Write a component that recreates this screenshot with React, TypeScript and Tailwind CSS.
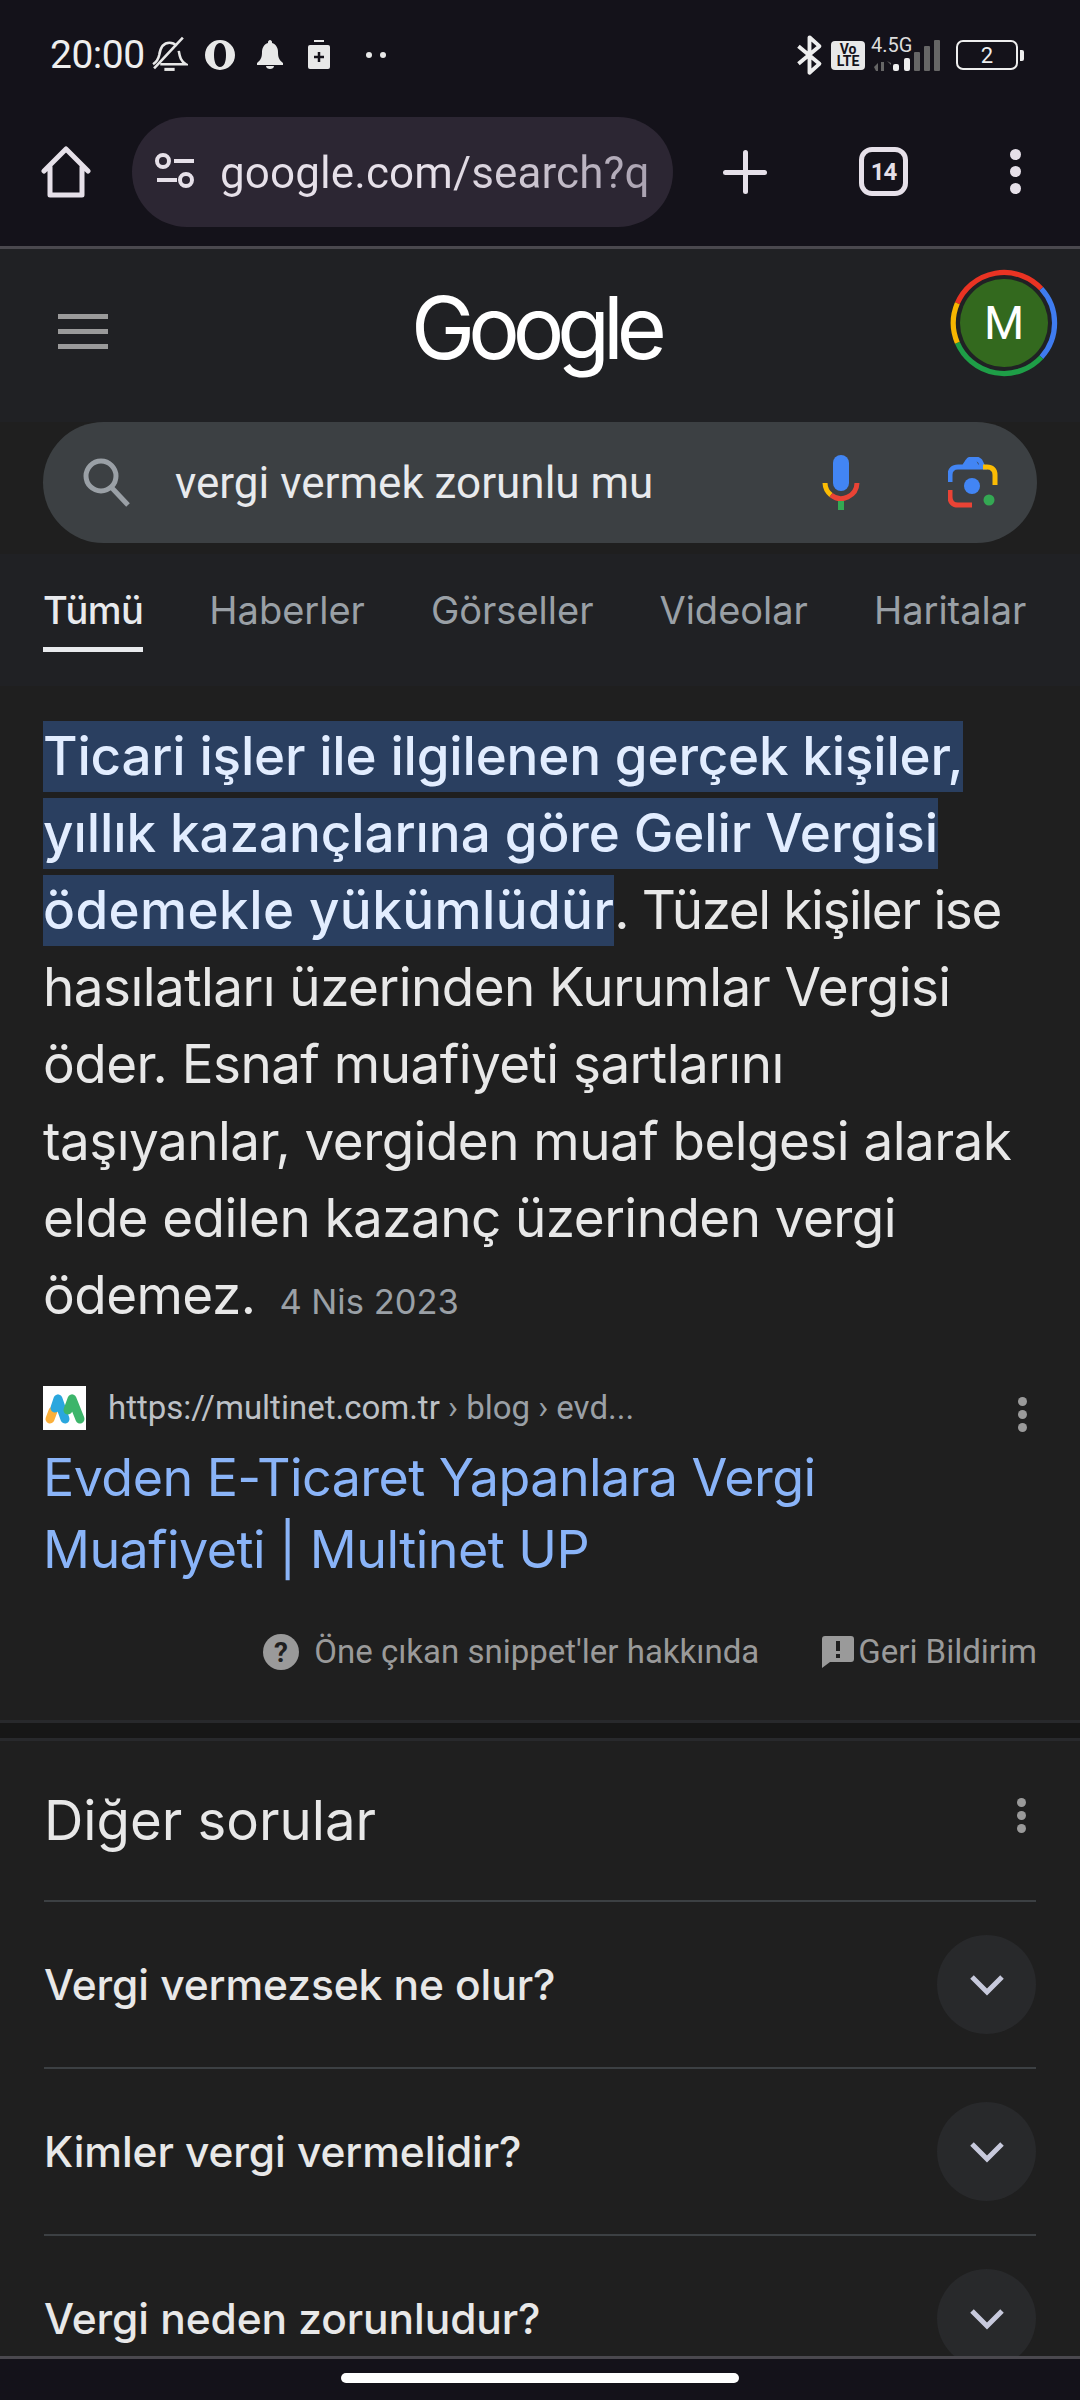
const sans = "font-['Inter',sans-serif]";
const roboto = "font-['Roboto',sans-serif]";

const StatusBar = () => (
  <div className="h-[102px] shrink-0 relative flex items-center justify-between pl-[50px] pr-[56px] pt-[8px]">
    <div className="flex items-center">
      <span className={`${roboto} text-[39px] text-[#eeeeee] tracking-[-0.5px]`}>20:00</span>
      <svg className="ml-[6px]" width="37" height="40" viewBox="0 0 36 38" fill="none" stroke="#e8e8e8" strokeWidth="2.5">
        <path d="M2 28c3-2 5-4 6-9 1-7 4-12 10-12 3 0 5 1 7 3M27 15c1 6 2 10 7 13H9" />
        <path d="M3 32L31 2" />
        <path d="M13 33h10" strokeWidth="3" />
      </svg>
      <svg className="ml-[16px]" width="32" height="32" viewBox="0 0 32 32">
        <path fillRule="evenodd" fill="#e8e8e8" d="M16 1a15 15 0 1 0 0 30 15 15 0 0 0 0-30zm0 3c-4 0-6 5-6 12s2 12 6 12 6-5 6-12-2-12-6-12z" />
      </svg>
      <svg className="ml-[20px]" width="28" height="32" viewBox="0 0 28 32" fill="#e8e8e8">
        <path d="M14 1c1 0 2 1 2 2v1c4 1 6 5 6 9 0 5 1 8 5 11v2H1v-2c4-3 5-6 5-11 0-4 2-8 6-9V3c0-1 1-2 2-2z" />
        <path d="M10 27h8c0 2-2 3-4 3s-4-1-4-3z" />
      </svg>
      <svg className="ml-[23px]" width="24" height="30" viewBox="0 0 24 30">
        <rect x="7" y="0" width="10" height="2" fill="#e8e8e8" />
        <rect x="1" y="5" width="22" height="24" rx="2" fill="#e8e8e8" />
        <path d="M12 12v10M7 17h10" stroke="#14121a" strokeWidth="2.5" />
      </svg>
      <div className="ml-[35px] flex gap-[8px]">
        <div className="w-[6px] h-[6px] rounded-full bg-[#e8e8e8]" />
        <div className="w-[6px] h-[6px] rounded-full bg-[#e8e8e8]" />
      </div>
    </div>
    <div className="flex items-center">
      <svg width="27" height="42" viewBox="0 0 24 38" fill="none" stroke="#eeeeee" strokeWidth="3.5" strokeLinejoin="round">
        <path d="M2 11l19 16-9 8V3l9 8L2 27" />
      </svg>
      <div className={`${roboto} ml-[8px] w-[34px] h-[29px] rounded-[4px] bg-[#e8e8e8] text-[#14121a] text-[14px] leading-[12px] font-bold flex flex-col items-center justify-center`}>
        <span>Vo</span>
        <span>LTE</span>
      </div>
      <div className="ml-[6px] w-[70px] h-[36px] relative">
        <span className={`${roboto} absolute left-0 top-[-7px] text-[20px] text-[#dddddd]`}>4.5G</span>
        <svg className="absolute left-0 top-0" width="70" height="36" viewBox="0 0 70 36">
          <path d="M3 30l4-4v8H5zM10 25v9h3v-9zM16 24l4 4v-2z" fill="#666666" />
          <rect x="22" y="27" width="6" height="7" rx="2" fill="#eeeeee" />
          <rect x="33" y="21" width="6" height="13" rx="2" fill="#eeeeee" />
          <rect x="43" y="15" width="6" height="19" rx="1" fill="#666666" />
          <rect x="53" y="9" width="6" height="25" rx="1" fill="#666666" />
          <rect x="63" y="3" width="6" height="31" rx="1" fill="#666666" />
        </svg>
      </div>
      <div className="ml-[15px] flex items-center">
        <div className={`${roboto} w-[62px] h-[30px] rounded-[7px] border-[2.5px] border-[#eeeeee] text-[#eeeeee] text-[22px] flex items-center justify-center`}>2</div>
        <div className="ml-[2px] w-[4px] h-[11px] rounded-r-[2px] bg-[#eeeeee]" />
      </div>
    </div>
  </div>
);

const Toolbar = () => (
  <div className="h-[147px] shrink-0 flex items-center border-b-[3px] border-[#4a484e] pb-[5px]">
    <div className="w-[132px] flex justify-center">
      <svg width="50" height="52" viewBox="0 0 50 52" fill="none" stroke="#e6e0e9" strokeWidth="5" strokeLinejoin="round" strokeLinecap="round">
        <path d="M3 25L25 3l22 22M9 21v28h32V21" />
      </svg>
    </div>
    <div className="w-[541px] h-[110px] rounded-full bg-[#2c2633] flex items-center pl-[22px] overflow-hidden">
      <svg width="42" height="38" viewBox="0 0 42 38" fill="none" stroke="#e6e0e9" strokeWidth="4">
        <circle cx="9" cy="8" r="6" />
        <path d="M20 8h20M3 27h20" />
        <circle cx="32" cy="27" r="6" />
      </svg>
      <span className={`${roboto} ml-[24px] pt-[2px] w-[440px] whitespace-nowrap text-[44px] tracking-[0.1px] bg-gradient-to-r from-[#e6e0e9] from-[50%] to-[#a79fae] bg-clip-text text-transparent`}>
        google.com/search?q
      </span>
    </div>
    <div className="ml-[50px] w-[44px] h-[44px] relative">
      <div className="absolute left-[20px] top-0 w-[5px] h-[44px] rounded-full bg-[#e6e0e9]" />
      <div className="absolute top-[20px] left-0 h-[5px] w-[44px] rounded-full bg-[#e6e0e9]" />
    </div>
    <div className={`${roboto} ml-[92px] w-[49px] h-[49px] rounded-[13px] border-[5px] border-[#e6e0e9] flex items-center justify-center text-[#e6e0e9] text-[24px] font-bold tracking-[-1px]`}>14</div>
    <div className="ml-[102px] flex flex-col gap-[6px]">
      <div className="w-[11px] h-[11px] rounded-full bg-[#e6e0e9]" />
      <div className="w-[11px] h-[11px] rounded-full bg-[#e6e0e9]" />
      <div className="w-[11px] h-[11px] rounded-full bg-[#e6e0e9]" />
    </div>
  </div>
);

const Avatar = () => (
  <div className="relative w-[112px] h-[112px] flex items-center justify-center">
    <svg className="absolute inset-0" width="112" height="112" viewBox="0 0 108 108" fill="none" strokeWidth="5">
      <path d="M9 35A49 49 0 0 1 90 21" stroke="#ea3323" />
      <path d="M90 21A49 49 0 0 1 90 87" stroke="#3f7cf0" />
      <path d="M90 87A49 49 0 0 1 9 73" stroke="#1e9e47" />
      <path d="M9 73A49 49 0 0 1 9 35" stroke="#f7b500" />
    </svg>
    <div className={`${roboto} w-[88px] h-[88px] rounded-full bg-[#33691e] text-white text-[46px] flex items-center justify-center`}>M</div>
  </div>
);

const Header = () => (
  <div className="bg-[#202124] h-[173px] shrink-0 relative flex justify-between pl-[58px] pr-[20px] pt-[18px]">
    <div className="mt-[47px] flex flex-col gap-[10px]">
      <div className="w-[50px] h-[5px] bg-[#9a9a9a]" />
      <div className="w-[50px] h-[5px] bg-[#9a9a9a]" />
      <div className="w-[50px] h-[5px] bg-[#9a9a9a]" />
    </div>
    <div className={`${sans} absolute left-[411px] top-[29px] text-[86px] leading-[100px] text-white font-normal tracking-[-7px]`}>Google</div>
    <Avatar />
  </div>
);

const MicIcon = () => (
  <svg width="38" height="56" viewBox="0 0 38 56" fill="none">
    <rect x="11" y="0" width="16" height="36" rx="8" fill="#4285f4" />
    <path d="M3 28a16 16 0 0 0 6 12" stroke="#fbbc04" strokeWidth="5" />
    <path d="M9 40a16 16 0 0 0 26-12" stroke="#ea4335" strokeWidth="5" />
    <rect x="16" y="46" width="6" height="9" fill="#34a853" />
  </svg>
);

const LensIcon = () => (
  <svg width="50" height="52" viewBox="0 0 50 52" fill="none" strokeWidth="5">
    <path d="M2 25v-7c0-5 3-8 8-8h6l4-6c1-2 3-2 4-2h4c2 0 3 1 4 2l3 6H16" stroke="#4285f4" />
    <path d="M35 10h4c5 0 8 3 8 8v10" stroke="#fbbc04" />
    <path d="M2 33v7c0 5 3 8 8 8h14" stroke="#ea4335" />
    <path d="M14 11h18l-4-8h-10z" fill="#4285f4" stroke="none" />
    <circle cx="24" cy="29" r="8" fill="#4285f4" stroke="none" />
    <circle cx="41" cy="43" r="5.5" fill="#34a853" stroke="none" />
  </svg>
);

const SearchBox = () => (
  <div className="bg-[#1f1f1f] shrink-0 px-[43px] pb-[11px] h-[132px] relative">
    <div className="h-[121px] rounded-full bg-[#3c4043] flex items-center pl-[40px] pr-[39px]">
      <svg width="48" height="50" viewBox="0 0 48 50" fill="none" stroke="#9aa0a6" strokeWidth="5">
        <circle cx="18" cy="18" r="15" />
        <path d="M29 30l16 17" />
      </svg>
      <span className={`${roboto} ml-[44px] text-[44px] text-[#e8eaed] flex-1`}>vergi vermek zorunlu mu</span>
      <MicIcon />
      <div className="ml-[88px]">
        <LensIcon />
      </div>
    </div>
  </div>
);

const tabs = ["Tümü", "Haberler", "Görseller", "Videolar", "Haritalar"];

const Tabs = () => (
  <div className={`${sans} bg-[#202124] h-[132px] shrink-0 flex gap-[66px] pl-[43px] whitespace-nowrap`}>
    {tabs.map((t, i) => (
      <div key={t} className={`relative pt-[29px] text-[38px] leading-[54px] ${i === 0 ? "text-[#e8eaed] font-medium tracking-[-0.5px]" : "text-[#9aa0a6]"}`}>
        {t}
        {i === 0 && <div className="absolute left-0 right-0 top-[93px] h-[5px] bg-[#e8eaed]" />}
      </div>
    ))}
  </div>
);

const Snippet = () => {
  const hl = "bg-[#2a3f60] text-[#e2edff] font-medium w-fit";
  const line = "h-[77px]";
  return (
    <div className={`${sans} mt-[35px] px-[43px] text-[53px] leading-[71px] text-[#e8e8e8] whitespace-nowrap tracking-[-0.55px]`}>
      <div className={line}>
        <div className={`${hl} tracking-[-0.2px]`}>Ticari işler ile ilgilenen gerçek kişiler,</div>
      </div>
      <div className={line}>
        <div className={`${hl} tracking-[-0.1px]`}>yıllık kazançlarına göre Gelir Vergisi</div>
      </div>
      <div className={line}>
        <span className={`${hl} inline-block tracking-[0.4px]`}>ödemekle yükümlüdür</span>
        <span className="tracking-[-1.4px]">. Tüzel kişiler ise</span>
      </div>
      <div className={line}>hasılatları üzerinden Kurumlar Vergisi</div>
      <div className={line}>öder. Esnaf muafiyeti şartlarını</div>
      <div className={line}>taşıyanlar, vergiden muaf belgesi alarak</div>
      <div className={line}>elde edilen kazanç üzerinden vergi</div>
      <div className={line}>
        ödemez.
        <span className="ml-[24px] text-[34.5px] text-[#9aa0a6] tracking-normal">4 Nis 2023</span>
      </div>
    </div>
  );
};

const Favicon = () => (
  <svg width="43" height="44" viewBox="0 0 43 44" className="bg-white shrink-0" fill="none" strokeLinecap="round">
    <path d="M7 33l3-8" stroke="#fbb03b" strokeWidth="9" />
    <path d="M12 22l3-9M15 13l7 20" stroke="#2aa7de" strokeWidth="9" />
    <path d="M25 24l4-11M29 13l8 20" stroke="#3cb56a" strokeWidth="9" />
  </svg>
);

const Source = () => (
  <div className="mt-[49px] px-[43px]">
    <div className="h-[44px] flex items-center relative">
      <Favicon />
      <span className={`${roboto} ml-[22px] text-[33px] text-[#bdc1c6]`}>
        https://multinet.com.tr<span className="text-[#9aa0a6]"> › blog › evd...</span>
      </span>
      <div className="absolute right-[10px] top-[11px] flex flex-col gap-[4px]">
        <div className="w-[9px] h-[9px] rounded-full bg-[#9a9a9a]" />
        <div className="w-[9px] h-[9px] rounded-full bg-[#9a9a9a]" />
        <div className="w-[9px] h-[9px] rounded-full bg-[#9a9a9a]" />
      </div>
    </div>
    <div className={`${sans} mt-[12px] text-[52px] leading-[72px] text-[#8ab4f8] tracking-[-0.55px]`}>
      Evden E-Ticaret Yapanlara Vergi
      <br />
      Muafiyeti | Multinet UP
    </div>
    <div className={`${roboto} mt-[46px] h-[40px] flex items-center justify-end text-[33px] text-[#9a9a9a]`}>
      <svg width="36" height="38" viewBox="0 0 36 38">
        <circle cx="18" cy="19" r="18" fill="#9a9a9a" />
        <text x="18" y="29" textAnchor="middle" fontSize="28" fontWeight="700" fill="#1f1f1f" fontFamily="Roboto">?</text>
      </svg>
      <span className="ml-[15px]">Öne çıkan snippet'ler hakkında</span>
      <svg className="ml-[63px]" width="32" height="32" viewBox="0 0 32 32">
        <path d="M3 0h26c2 0 3 1 3 3v20c0 2-1 3-3 3H8l-8 6V3c0-2 1-3 3-3z" fill="#9a9a9a" />
        <rect x="14" y="5" width="4" height="10" fill="#1f1f1f" />
        <rect x="14" y="18" width="4" height="4" fill="#1f1f1f" />
      </svg>
      <span className="ml-[4px]">Geri Bildirim</span>
    </div>
  </div>
);

const questions = ["Vergi vermezsek ne olur?", "Kimler vergi vermelidir?", "Vergi neden zorunludur?"];

const Related = () => (
  <div className="px-[44px] relative flex-1 overflow-hidden">
    <div className="h-[159px] flex items-center justify-between">
      <span className={`${sans} text-[54.5px] text-[#e8e8e8]`}>Diğer sorular</span>
      <div className="mr-[10px] flex flex-col gap-[4px] mb-[10px]">
        <div className="w-[9px] h-[9px] rounded-full bg-[#9a9a9a]" />
        <div className="w-[9px] h-[9px] rounded-full bg-[#9a9a9a]" />
        <div className="w-[9px] h-[9px] rounded-full bg-[#9a9a9a]" />
      </div>
    </div>
    {questions.map((q) => (
      <div key={q} className="h-[167px] border-t-[2px] border-[#3c4043] flex items-center justify-between">
        <span className={`${sans} text-[42.5px] text-[#e8e8e8] font-medium tracking-[-0.1px]`}>{q}</span>
        <div className="w-[99px] h-[99px] rounded-full bg-[#28292b] flex items-center justify-center">
          <svg width="34" height="22" viewBox="0 0 34 22" fill="none" stroke="#c7c9dc" strokeWidth="5">
            <path d="M2 3l15 15L32 3" />
          </svg>
        </div>
      </div>
    ))}
  </div>
);

export default function App() {
  return (
    <div className="w-[1080px] h-[2400px] bg-[#1f1f1f] flex flex-col overflow-hidden">
      <div className="bg-[#14121a] shrink-0">
        <StatusBar />
        <Toolbar />
      </div>
      <Header />
      <SearchBox />
      <Tabs />
      <Snippet />
      <Source />
      <div className="mt-[48px] shrink-0 h-[21px] bg-[#171717] border-y-[3px] border-[#28292c]" />
      <Related />
      <div className="h-[44px] shrink-0 bg-[#14121a] border-t-[3px] border-[#4a484e] flex justify-center pt-[14px]">
        <div className="w-[398px] h-[10px] rounded-full bg-white" />
      </div>
    </div>
  );
}
